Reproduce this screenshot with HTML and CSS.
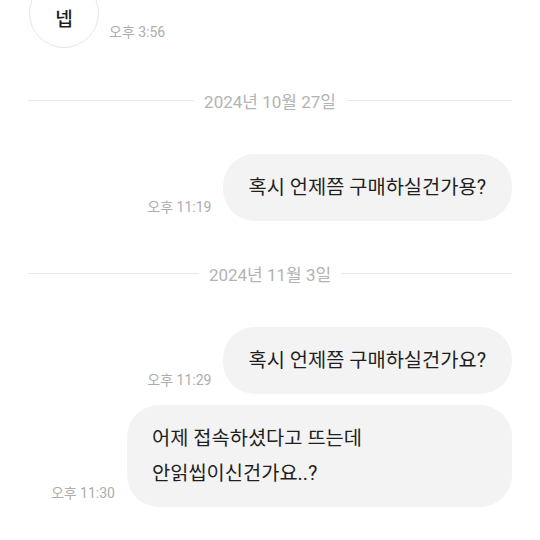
FILE: index.html
```html
<!DOCTYPE html>
<html lang="ko">
<head>
<meta charset="utf-8">
<link rel="stylesheet" href="styles.css">
</head>
<body>
<div class="chat">
  <div class="row left first">
    <div class="bubble circle">넵</div>
    <span class="time">오후 3:56</span>
  </div>

  <div class="date"><span class="line"></span><span class="label">2024년 10월 27일</span><span class="line"></span></div>

  <div class="row right">
    <span class="time">오후 11:19</span>
    <div class="bubble">혹시 언제쯤 구매하실건가용?</div>
  </div>

  <div class="date"><span class="line"></span><span class="label">2024년 11월 3일</span><span class="line"></span></div>

  <div class="row right">
    <span class="time">오후 11:29</span>
    <div class="bubble">혹시 언제쯤 구매하실건가요?</div>
  </div>

  <div class="row right next">
    <span class="time">오후 11:30</span>
    <div class="bubble">어제 접속하셨다고 뜨는데 안읽씹이신건가요..?</div>
  </div>
</div>
</body>
</html>
```

FILE: styles.css
```css
* { box-sizing: border-box; }
html, body {
  margin: 0;
  padding: 0;
  background: #ffffff;
  overflow: hidden;
}
body {
  width: 540px;
  height: 540px;
  font-family: "Roboto", "Noto Sans CJK KR", sans-serif;
  color: #1f1f1f;
}
.chat {
  display: flex;
  flex-direction: column;
  padding: 0 28px;
}
.row {
  display: flex;
  align-items: flex-end;
  gap: 12px;
}
.row.right { justify-content: flex-end; }
.row.left { justify-content: flex-start; }
.row.first { margin-top: -22px; padding-left: 1px; gap: 10px; }
.row.next { margin-top: 11px; }

.time {
  font-size: 14px;
  line-height: 16px;
  color: #adadad;
  padding-bottom: 6px;
  white-space: nowrap;
}
.row.first .time { padding-bottom: 8px; }

.bubble {
  background: #f3f3f3;
  border-radius: 32px;
  padding: 16px 26px 16px 25px;
  font-size: 19.8px;
  line-height: 35px;
  max-width: 385px;
  word-break: keep-all;
  color: #1f1f1f;
}
.bubble.circle {
  width: 70px;
  height: 70px;
  padding: 0;
  border-radius: 50%;
  background: #ffffff;
  border: 1px solid #e6e6e6;
  display: flex;
  align-items: center;
  justify-content: center;
  font-size: 19px;
  font-weight: 500;
  padding-top: 12px;
}

.date {
  display: flex;
  align-items: center;
  gap: 10px;
  height: 20px;
  margin: 42px 0 44px;
}
.date .line {
  flex: 1;
  height: 1px;
  background: #e8e8e8;
}
.date .label {
  font-size: 17px;
  color: #b3b3b3;
  white-space: nowrap;
}
```
